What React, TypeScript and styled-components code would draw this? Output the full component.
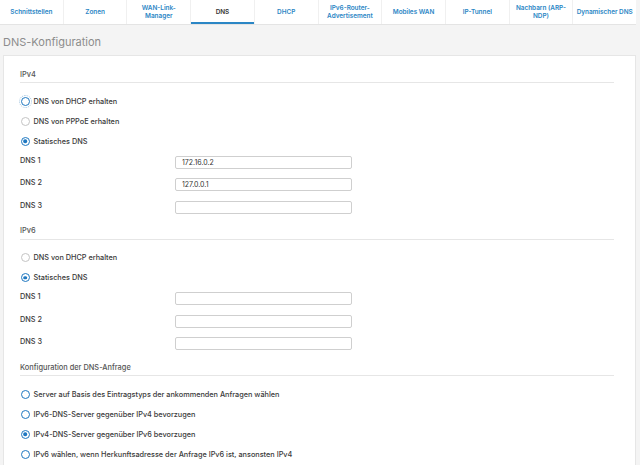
import React from "react";
import styled, { createGlobalStyle, css } from "styled-components";

const GlobalStyle = createGlobalStyle`
  html, body {
    margin: 0;
    padding: 0;
    background: #f4f4f4;
    font-family: Inter, "Noto Sans", sans-serif;
    color: #3a3a3a;
  }
`;

const Page = styled.div`
  width: 640px;
  height: 465px;
  overflow: hidden;
`;

const TabBar = styled.div`
  display: flex;
  width: 636px;
  height: 25px;
  background: #fff;
  border-bottom: 1px solid #e4e4e4;
  box-sizing: border-box;
`;

const Tab = styled.div<{ $active?: boolean }>`
  flex: 1 1 0;
  display: flex;
  align-items: center;
  justify-content: center;
  text-align: center;
  font-size: 6.4px;
  line-height: 8.5px;
  font-weight: 600;
  color: #2b86c5;
  padding: 0 2px;
  white-space: pre-line;
  border-right: 1px solid #f0f0f0;
  box-sizing: border-box;
  &:last-child {
    border-right: none;
  }
  ${(p) =>
    p.$active &&
    css`
      color: #333;
      box-shadow: inset 0 -2px 0 #2b86c5;
    `}
`;

const Title = styled.h1`
  margin: 0;
  height: 30px;
  padding: 3px 3px 0;
  display: flex;
  align-items: center;
  box-sizing: border-box;
  font-size: 11px;
  font-weight: 400;
  color: #8c8c8c;
`;

const Panel = styled.div`
  margin-left: 3px;
  width: 633px;
  height: 420px;
  background: #fff;
  border: 1px solid #e6e6e6;
  box-sizing: border-box;
  padding: 6px 21px 0 16px;
`;

const SectionHeader = styled.div`
  margin-top: 4px;
  height: 16px;
  display: flex;
  align-items: center;
  border-bottom: 1px solid #e6e6e6;
  font-size: 7.4px;
  font-weight: 500;
  color: #555;
`;

const Options = styled.div`
  padding-top: 8px;
`;

const RadioRow = styled.label`
  height: 20px;
  display: flex;
  align-items: center;
  gap: 4px;
  font-size: 7.3px;
  font-weight: 500;
  color: #3a3a3a;
`;

const RadioDot = styled.span<{ $tone: "blue" | "gray"; $checked?: boolean; $focus?: boolean }>`
  position: relative;
  width: 9px;
  height: 9px;
  margin-left: 0.5px;
  border-radius: 50%;
  box-sizing: border-box;
  flex: none;
  border: ${(p) => (p.$tone === "blue" ? "1.7px solid #1f78c1" : "1px solid #c4c4c4")};
  ${(p) =>
    p.$focus &&
    css`
      outline: 1px dotted #9cc0de;
      outline-offset: 1.5px;
    `}
  ${(p) =>
    p.$checked &&
    css`
      border-width: 1.3px;
      &::after {
        content: "";
        position: absolute;
        left: 50%;
        top: 50%;
        width: 3.6px;
        height: 3.6px;
        border-radius: 50%;
        background: #1f78c1;
        transform: translate(-50%, -50%);
      }
    `}
`;

const FieldRow = styled.div`
  height: 22.5px;
  display: flex;
  align-items: center;
`;

const FieldLabel = styled.span`
  width: 155px;
  padding-bottom: 4px;
  font-size: 7.3px;
  font-weight: 500;
  color: #3a3a3a;
  flex: none;
`;

const TextInput = styled.input`
  width: 177px;
  height: 13px;
  box-sizing: border-box;
  border: 1px solid #cfcfcf;
  border-radius: 2px;
  padding: 0 6px;
  font-family: inherit;
  font-size: 7px;
  color: #333;
  background: #fff;
  outline: none;
`;

type Opt = { label: string; tone: "blue" | "gray"; checked?: boolean; focus?: boolean };

const tabs = [
  "Schnittstellen",
  "Zonen",
  "WAN-Link-\nManager",
  "DNS",
  "DHCP",
  "IPv6-Router-\nAdvertisement",
  "Mobiles WAN",
  "IP-Tunnel",
  "Nachbarn (ARP-\nNDP)",
  "Dynamischer DNS",
];

const RadioList: React.FC<{ options: Opt[] }> = ({ options }) => (
  <Options>
    {options.map((o) => (
      <RadioRow key={o.label}>
        <RadioDot $tone={o.tone} $checked={o.checked} $focus={o.focus} />
        {o.label}
      </RadioRow>
    ))}
  </Options>
);

const DnsFields: React.FC<{ values: string[] }> = ({ values }) => (
  <>
    {values.map((v, i) => (
      <FieldRow key={i}>
        <FieldLabel>DNS {i + 1}</FieldLabel>
        <TextInput defaultValue={v} />
      </FieldRow>
    ))}
  </>
);

const App: React.FC = () => {
  return (
    <Page>
      <GlobalStyle />
      <TabBar>
        {tabs.map((t) => (
          <Tab key={t} $active={t === "DNS"}>
            {t}
          </Tab>
        ))}
      </TabBar>
      <Title>DNS-Konfiguration</Title>
      <Panel>
        <SectionHeader>IPv4</SectionHeader>
        <RadioList
          options={[
            { label: "DNS von DHCP erhalten", tone: "blue", focus: true },
            { label: "DNS von PPPoE erhalten", tone: "gray" },
            { label: "Statisches DNS", tone: "blue", checked: true },
          ]}
        />
        <DnsFields values={["172.16.0.2", "127.0.0.1", ""]} />

        <SectionHeader>IPv6</SectionHeader>
        <RadioList
          options={[
            { label: "DNS von DHCP erhalten", tone: "gray" },
            { label: "Statisches DNS", tone: "blue", checked: true },
          ]}
        />
        <DnsFields values={["", "", ""]} />

        <SectionHeader>Konfiguration der DNS-Anfrage</SectionHeader>
        <RadioList
          options={[
            { label: "Server auf Basis des Eintragstyps der ankommenden Anfragen wählen", tone: "blue" },
            { label: "IPv6-DNS-Server gegenüber IPv4 bevorzugen", tone: "blue" },
            { label: "IPv4-DNS-Server gegenüber IPv6 bevorzugen", tone: "blue", checked: true },
            { label: "IPv6 wählen, wenn Herkunftsadresse der Anfrage IPv6 ist, ansonsten IPv4", tone: "blue" },
          ]}
        />
      </Panel>
    </Page>
  );
};

export default App;
